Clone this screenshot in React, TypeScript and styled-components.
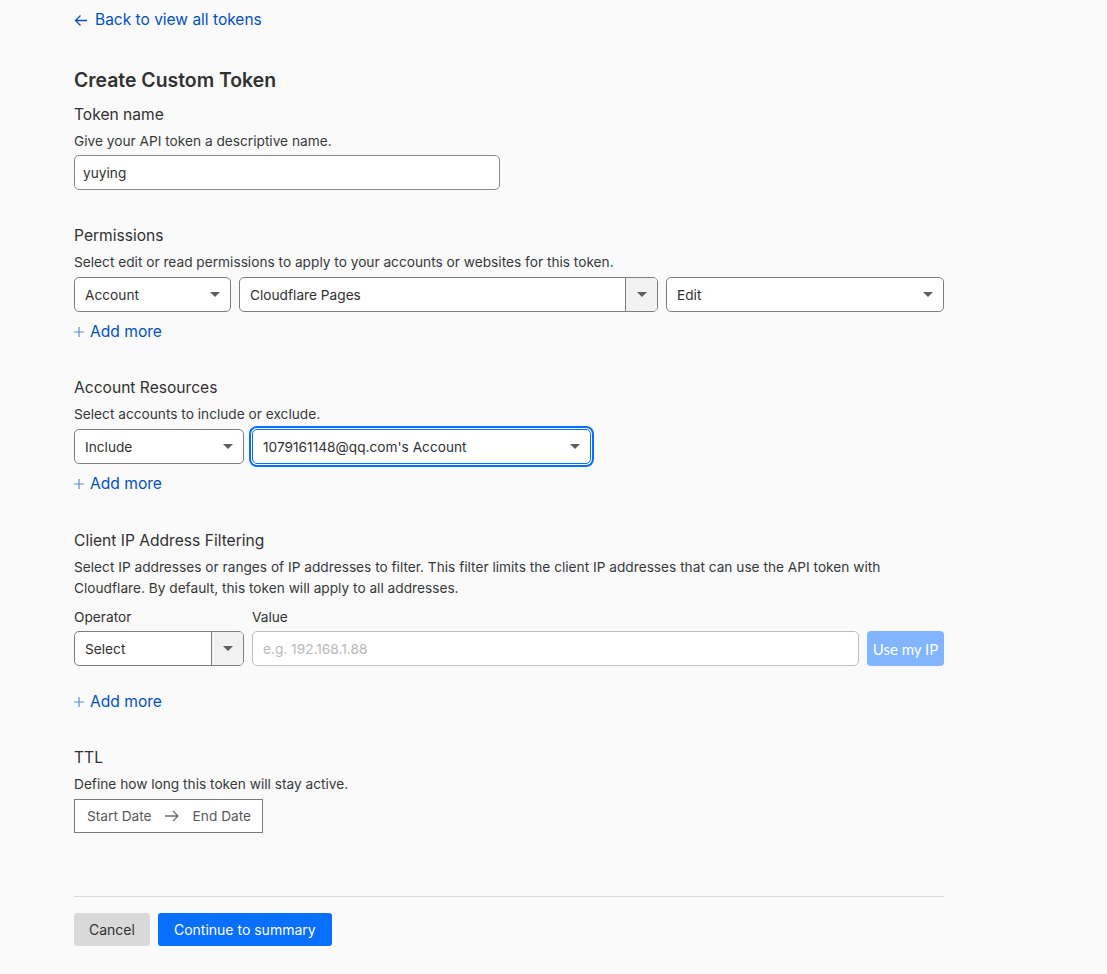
import React from "react";
import styled, { createGlobalStyle } from "styled-components";

const Global = createGlobalStyle`
  html, body { margin: 0; padding: 0; background: #fafafa; }
  body { font-family: Inter, "Noto Sans", sans-serif; color: #313131; }
  * { box-sizing: border-box; }
`;

const Page = styled.div`
  padding: 10px 0 40px 74px;
  width: 944px;
  min-height: 974px;
`;

const BackLink = styled.a`
  display: inline-flex;
  align-items: center;
  gap: 7px;
  font-size: 15.5px;
  line-height: 20px;
  color: #0051c3;
  text-decoration: none;
  cursor: pointer;
`;

const Title = styled.h1`
  margin: 35px 0 0;
  font-size: 19.4px;
  line-height: 28px;
  font-weight: 600;
  color: #313131;
`;

const Section = styled.section<{ $mt?: number }>`
  margin-top: ${(p) => p.$mt ?? 32}px;
  display: flex;
  flex-direction: column;
`;

const Label = styled.div`
  font-size: 15.6px;
  line-height: 24px;
  color: #313131;
`;

const Desc = styled.p`
  margin: 4px 0 0;
  font-size: 13.7px;
  line-height: 21px;
  color: #36393a;
  max-width: 830px;
`;

const Row = styled.div<{ $mt?: number }>`
  display: flex;
  gap: 8px;
  margin-top: ${(p) => p.$mt ?? 4}px;
`;

const TextInput = styled.div<{ $w: number; $placeholder?: boolean; $light?: boolean }>`
  width: ${(p) => p.$w}px;
  height: 35px;
  border: 1px solid ${(p) => (p.$light ? "#bdbdbd" : "#8a8a8a")};
  border-radius: 5px;
  background: #fff;
  display: flex;
  align-items: center;
  padding: 0 ${(p) => (p.$light ? 10 : 8)}px;
  font-size: 13.7px;
  color: ${(p) => (p.$placeholder ? "#b8b8b8" : "#313131")};
`;

const Select = styled.div<{ $w: number; $focused?: boolean }>`
  width: ${(p) => p.$w}px;
  height: 35px;
  border: 1px solid ${(p) => (p.$focused ? "#086fff" : "#7d7d7d")};
  border-radius: 5px;
  background: #fff;
  display: flex;
  align-items: center;
  justify-content: space-between;
  padding: 0 10px;
  font-size: 13.7px;
  color: #313131;
  box-shadow: ${(p) => (p.$focused ? "0 0 0 1px #fff, 0 0 0 3px #086fff" : "none")};
`;

const Combo = styled.div<{ $w: number }>`
  width: ${(p) => p.$w}px;
  height: 35px;
  border: 1px solid #7d7d7d;
  border-radius: 5px;
  background: #fff;
  display: flex;
  overflow: hidden;
  font-size: 13.7px;
  color: #313131;
`;

const ComboText = styled.div`
  flex: 1;
  display: flex;
  align-items: center;
  padding: 0 10px;
`;

const ComboButton = styled.div`
  width: 32px;
  border-left: 1px solid #7d7d7d;
  background: #f2f2f2;
  display: flex;
  align-items: center;
  justify-content: center;
`;

const Caret = styled.span`
  width: 0;
  height: 0;
  border-left: 5px solid transparent;
  border-right: 5px solid transparent;
  border-top: 5px solid #5e5e5e;
`;

const AddMore = styled.a<{ $mt?: number }>`
  margin-top: ${(p) => p.$mt ?? 8}px;
  display: inline-flex;
  align-items: center;
  gap: 6px;
  align-self: flex-start;
  font-size: 15.6px;
  line-height: 24px;
  color: #0051c3;
  cursor: pointer;
`;

const FieldCol = styled.div<{ $w: number }>`
  width: ${(p) => p.$w}px;
  font-size: 13.7px;
  line-height: 20px;
  color: #313131;
`;

const UseIpButton = styled.button`
  width: 77px;
  height: 35px;
  border: none;
  border-radius: 4px;
  background: #82b5ff;
  color: #fff;
  font-family: Lato, "Open Sans", sans-serif;
  font-size: 15px;
  padding: 0;
`;

const DateBox = styled.div`
  margin-top: 4px;
  align-self: flex-start;
  width: 189px;
  height: 34px;
  border: 1px solid #7a7a7a;
  background: #fff;
  display: flex;
  align-items: center;
  padding: 0 12px;
  font-size: 13.7px;
  color: #595959;
  white-space: nowrap;
`;

const ArrowWrap = styled.span`
  display: inline-flex;
  flex-shrink: 0;
  margin: 0 13px 0 12px;
`;

const Divider = styled.hr`
  margin: 63px 0 0;
  width: 870px;
  border: none;
  border-top: 1px solid #d9d9d9;
`;

const Actions = styled.div`
  display: flex;
  gap: 8px;
  margin-top: 16px;
`;

const Button = styled.button<{ $primary?: boolean }>`
  height: 33px;
  border: none;
  border-radius: 3px;
  padding: 0 ${(p) => (p.$primary ? 16 : 15)}px;
  font-family: Inter, sans-serif;
  font-size: 14px;
  background: ${(p) => (p.$primary ? "#086fff" : "#d9d9d9")};
  color: ${(p) => (p.$primary ? "#fff" : "#313131")};
`;

const LeftArrow = () => (
  <svg width="14" height="14" viewBox="0 0 14 14" fill="none" stroke="#0051c3" strokeWidth="1.3">
    <path d="M13 7.5H1.5M6.5 2.5L1.5 7.5L6.5 12.5" />
  </svg>
);

const RightArrow = () => (
  <svg width="16" height="12" viewBox="0 0 16 12" fill="none" stroke="#6b6b6b" strokeWidth="1.3">
    <path d="M1 6H14M9 1L14 6L9 11" />
  </svg>
);

const Plus = () => (
  <svg width="10" height="10" viewBox="0 0 10 10" stroke="#5c8fd6" strokeWidth="1.2">
    <path d="M5 0V10M0 5H10" />
  </svg>
);

export default function App() {
  return (
    <>
      <Global />
      <Page>
        <BackLink>
          <LeftArrow />
          Back to view all tokens
        </BackLink>
        <Title>Create Custom Token</Title>

        <Section $mt={9}>
          <Label>Token name</Label>
          <Desc>Give your API token a descriptive name.</Desc>
          <Row $mt={3}>
            <TextInput $w={426}>yuying</TextInput>
          </Row>
        </Section>

        <Section $mt={34}>
          <Label>Permissions</Label>
          <Desc>Select edit or read permissions to apply to your accounts or websites for this token.</Desc>
          <Row>
            <Select $w={157}>
              Account
              <Caret />
            </Select>
            <Combo $w={419}>
              <ComboText>Cloudflare Pages</ComboText>
              <ComboButton>
                <Caret />
              </ComboButton>
            </Combo>
            <Select $w={278}>
              Edit
              <Caret />
            </Select>
          </Row>
          <AddMore>
            <Plus />
            Add more
          </AddMore>
        </Section>

        <Section>
          <Label>Account Resources</Label>
          <Desc>Select accounts to include or exclude.</Desc>
          <Row>
            <Select $w={170}>
              Include
              <Caret />
            </Select>
            <Select $w={339} $focused>
              1079161148@qq.com's Account
              <Caret />
            </Select>
          </Row>
          <AddMore>
            <Plus />
            Add more
          </AddMore>
        </Section>

        <Section $mt={33}>
          <Label>Client IP Address Filtering</Label>
          <Desc>
            Select IP addresses or ranges of IP addresses to filter. This filter limits the client IP addresses that can
            use the API token with Cloudflare. By default, this token will apply to all addresses.
          </Desc>
          <Row $mt={8}>
            <FieldCol $w={170}>Operator</FieldCol>
            <FieldCol $w={607}>Value</FieldCol>
          </Row>
          <Row>
            <Combo $w={170}>
              <ComboText>Select</ComboText>
              <ComboButton>
                <Caret />
              </ComboButton>
            </Combo>
            <TextInput $w={607} $placeholder $light>
              e.g. 192.168.1.88
            </TextInput>
            <UseIpButton>Use my IP</UseIpButton>
          </Row>
          <AddMore $mt={24}>
            <Plus />
            Add more
          </AddMore>
        </Section>

        <Section>
          <Label>TTL</Label>
          <Desc>Define how long this token will stay active.</Desc>
          <DateBox>
            Start Date
            <ArrowWrap>
              <RightArrow />
            </ArrowWrap>
            End Date
          </DateBox>
        </Section>

        <Divider />
        <Actions>
          <Button>Cancel</Button>
          <Button $primary>Continue to summary</Button>
        </Actions>
      </Page>
    </>
  );
}
